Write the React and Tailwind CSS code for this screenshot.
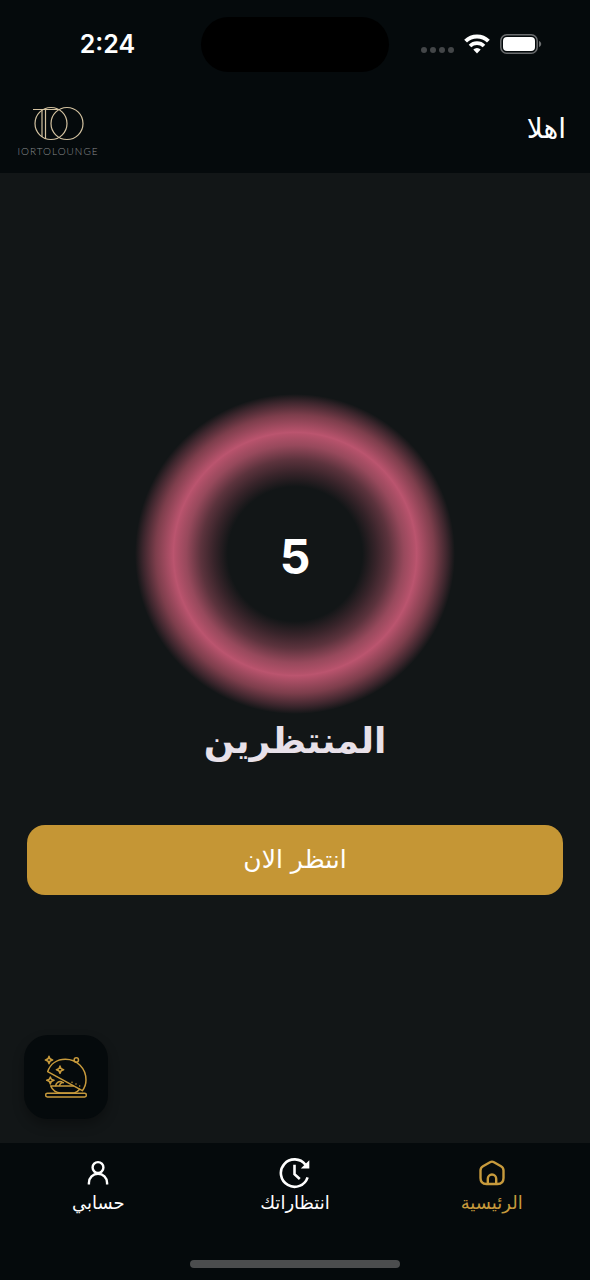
import React from "react";

function WifiIcon() {
  return (
    <svg viewBox="0 0 26 20" className="h-5 w-[26px]" fill="none" stroke="#fff" strokeWidth="4" aria-hidden="true">
      <path d="M1.6 7.2a16.2 16.2 0 0 1 22.8 0" />
      <path d="M6 12a9.9 9.9 0 0 1 14 0" strokeWidth="3.6" />
      <path d="M13 19.4 9.3 15.6a5.3 5.3 0 0 1 7.4 0Z" fill="#fff" stroke="none" />
    </svg>
  );
}

function BatteryIcon() {
  return (
    <svg viewBox="0 0 42 20" className="h-5 w-[42px]" fill="none" aria-hidden="true">
      <rect x="0.8" y="0.8" width="36.4" height="18.4" rx="6" stroke="#6b6d6f" strokeWidth="1.5" />
      <rect x="3" y="3" width="32" height="14" rx="4" fill="#fff" />
      <path d="M39 7v6c1.4-.5 2.2-1.700 2.200-3S40.400 7.500 39 7Z" fill="#6b6d6f" />
    </svg>
  );
}

function StatusBar() {
  return (
    <div className="grid h-22 grid-cols-[1fr_188px_1fr] items-center" dir="ltr">
      <time className="pl-3.5 text-center font-['Inter'] text-[25px] leading-8 font-semibold">2:24</time>
      <div className="h-[55px] rounded-full bg-black" />
      <div className="flex items-center justify-end gap-2.5 pr-12">
        <div className="flex gap-[3px] pt-3">
          <i className="size-1.5 rounded-full bg-[#434648]" />
          <i className="size-1.5 rounded-full bg-[#434648]" />
          <i className="size-1.5 rounded-full bg-[#434648]" />
          <i className="size-1.5 rounded-full bg-[#434648]" />
        </div>
        <WifiIcon />
        <BatteryIcon />
      </div>
    </div>
  );
}

function Logo() {
  return (
    <div className="flex w-20 flex-col items-center gap-1" dir="ltr">
      <svg viewBox="0 0 52 36" className="h-9 w-[52px]" fill="none" stroke="#d3c2a0" strokeWidth="1.200" aria-hidden="true">
        <circle cx="19" cy="18.500" r="16" />
        <circle cx="35" cy="18.500" r="16" />
        <path d="M1 4.500h27M10 5v27M13.500 5v29" />
      </svg>
      <span className="font-['Lato'] text-[10px] leading-3 font-light tracking-widest whitespace-nowrap text-[#8b8d8e]">
        IORTOLOUNGE
      </span>
    </div>
  );
}

function ClocheIcon() {
  return (
    <svg viewBox="103 105 132 132" className="size-11" fill="none" stroke="#c79a3c" strokeWidth="4.500" strokeLinecap="round" strokeLinejoin="round" aria-hidden="true">
      <path d="M114 155C122 132 142 118 167 118C202 118 229 145 229 180C229 192 225 203 218 212Z" />
      <circle cx="200" cy="120" r="6.500" />
      <path d="M123 198H191M123 198C128 209 139 218 153 219H194C201 217 206 213 210 208" />
      <path d="M138 197C139 188 147 183 156 185M150 196C151 190 156 187 161 188" />
      <rect x="108" y="220" width="122" height="11" rx="5" />
      <path d="M118 109Q119 119 129 120Q119 121 118 131Q117 121 107 120Q117 119 118 109Z" />
      <path d="M151 138Q152 148 162 149Q152 150 151 160Q150 150 140 149Q150 148 151 138Z" />
      <path d="M122 171Q123 180 133 181Q123 182 122 192Q121 182 111 181Q121 180 122 171Z" />
      <path d="M187 187v.1M199 192v.1M210 198v.1" />
    </svg>
  );
}

function HomeIcon() {
  return (
    <svg viewBox="0 0 26 26" className="size-[26px]" fill="none" stroke="currentColor" strokeWidth="2.400" strokeLinejoin="round" aria-hidden="true">
      <path d="M11 2.200 4 6.200C2.300 7.200 1.500 8.400 1.500 10.400V18c0 4 2 6 6 6h11c4 0 6-2 6-6v-7.600c0-2-.8-3.200-2.500-4.200l-7-4c-1.400-.8-2.600-.8-4 0Z" />
      <path d="M8.800 24v-5.300a4.200 4.200 0 0 1 8.400 0V24" />
    </svg>
  );
}

function ClockIcon() {
  return (
    <svg viewBox="0 0 32 32" className="size-8" fill="none" stroke="currentColor" strokeWidth="2.600" aria-hidden="true">
      <path d="M28.600 20.300A13.700 13.700 0 1 1 26.500 7.800" />
      <path d="M30.300 3.300v8.300h-8.500Z" fill="currentColor" stroke="none" />
      <path d="M15.500 7.800v9.400l5.300 4.800" />
    </svg>
  );
}

function UserIcon() {
  return (
    <svg viewBox="0 0 22 26" className="h-[26px] w-[22px]" fill="none" stroke="currentColor" strokeWidth="2.400" aria-hidden="true">
      <circle cx="11" cy="7.500" r="5.400" />
      <path d="M1.900 24.500v-1.600a9.100 9.100 0 0 1 18.200 0v1.600" />
    </svg>
  );
}

function NavItem({ icon, label, active }) {
  return (
    <a
      href="#"
      aria-current={active ? "page" : undefined}
      className={active ? "flex flex-1 flex-col items-center text-[#c79a3c]" : "flex flex-1 flex-col items-center text-white"}
    >
      <span className="flex h-8 items-center">{icon}</span>
      <span className="text-[18px] leading-7">{label}</span>
    </a>
  );
}

export default function App() {
  return (
    <div dir="rtl" className="flex min-h-screen flex-col bg-[#121617] font-['DejaVu_Sans',sans-serif] text-white">
      <header className="bg-[#050a0c]">
        <StatusBar />
        <div className="flex h-[85px] items-center justify-between pr-6 pl-[18px]">
          <p className="pb-1 text-[28px] leading-8">اهلا</p>
          <Logo />
        </div>
      </header>

      <main className="flex flex-1 flex-col px-6 pt-[221px] pb-6">
        <section className="flex flex-col items-center">
          <div className="flex size-80 items-center justify-center rounded-full bg-[radial-gradient(circle_closest-side,#121617_42%,#38242a_51%,#5c333d_59%,#97495c_68%,#b5526b_75%,#bb556f_76%,#b5526b_77%,#7d3e4c_87%,#3d262d_95%,#121617_100%)]">
            <span className="pt-1.5 font-['Inter'] text-[48px] leading-none font-bold">5</span>
          </div>
          <h1 className="text-[36px] leading-[54px] font-bold text-[#e8e1e9]">المنتظرين</h1>
        </section>
        <button type="button" className="mx-[3px] mt-[57px] h-[70px] rounded-[18px] bg-[#c59635] text-[25px] leading-8">
          انتظر الان
        </button>
        <button
          type="button"
          aria-label="القائمة"
          className="mt-auto flex size-[84px] items-center justify-center self-end rounded-3xl bg-[#050a0c] shadow-[0_6px_12px_rgba(0,0,0,0.3)]"
        >
          <ClocheIcon />
        </button>
      </main>

      <nav className="bg-[#050a0c] pt-3.5 pb-3">
        <div className="flex">
          <NavItem active icon={<HomeIcon />} label="الرئيسية" />
          <NavItem icon={<ClockIcon />} label="انتظاراتك" />
          <NavItem icon={<UserIcon />} label="حسابي" />
        </div>
        <div className="mx-auto mt-[43px] h-2 w-[210px] rounded-full bg-[#4b4d4e]" />
      </nav>
    </div>
  );
}
